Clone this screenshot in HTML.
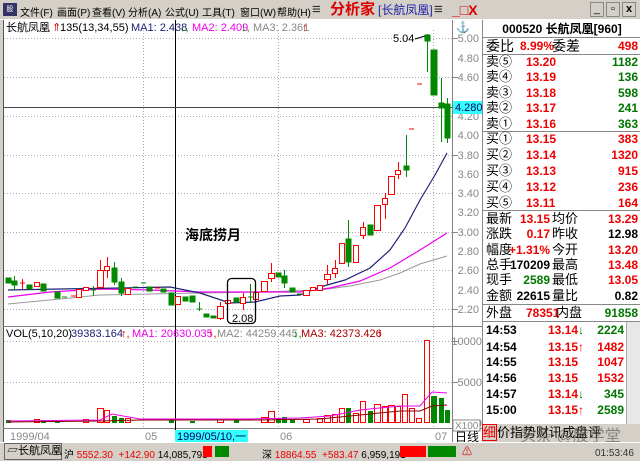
<!DOCTYPE html>
<html><head><meta charset="utf-8"><style>
*{margin:0;padding:0;box-sizing:border-box}
body{width:640px;height:461px;overflow:hidden;background:#d4d0c8;font-family:"Liberation Sans","Noto Sans CJK SC",sans-serif;font-size:12px;position:relative}
.a{position:absolute;white-space:nowrap}
.m{position:absolute;top:4px;font-size:10px;color:#000}
.rp{position:absolute;left:482px;top:20px;width:158px;height:404px;background:#fff;border-left:1px solid #888}
.in{position:absolute;left:0;top:8px;width:158px;height:396px}
.r{position:absolute;left:3px;width:152px;height:16px;font-size:13px;line-height:16px}
.r b{position:absolute;font-weight:bold;font-size:12px}
.red{color:#e00}.grn{color:#070}.blk{color:#000}
.hl{position:absolute;left:0;width:158px;height:1px;background:#888}
.l2{position:absolute;left:66px}
</style></head><body>
<div class="a" style="left:0;top:0;width:640px;height:20px;background:#d4d0c8;border-bottom:1px solid #fff"></div>
<div class="a" style="left:3px;top:3px;width:14px;height:13px;background:#336;color:#fff;font-size:7px;line-height:13px;text-align:center">股</div>
<div class="m" style="left:20px">文件(F)</div><div class="m" style="left:57px">画面(P)</div><div class="m" style="left:92px">查看(V)</div><div class="m" style="left:128px">分析(A)</div><div class="m" style="left:165px">公式(U)</div><div class="m" style="left:202px">工具(T)</div><div class="m" style="left:240px">窗口(W)</div><div class="m" style="left:277px">帮助(H)</div>
<div class="a" style="left:312px;top:1px;font-size:15px;line-height:18px;color:#333">≡</div>
<div class="a" style="left:330px;top:1px;font-size:15px;line-height:18px;color:#d00;font-weight:bold">分析家</div>
<div class="a" style="left:378px;top:2px;font-size:12px;line-height:17px;color:#22a">[长航凤凰]</div>
<div class="a" style="left:434px;top:1px;font-size:15px;line-height:18px;color:#333">≡</div>
<div class="a" style="left:452px;top:1px;font-size:14px;line-height:18px;color:#d00;font-weight:bold">_□X</div>
<div class="a" style="left:590px;top:2px;width:48px;height:15px;font-size:11px;line-height:13px;display:flex;gap:2px"><span style="width:14px;border:1px solid #888;text-align:center">_</span><span style="width:14px;border:1px solid #888;text-align:center">▫</span><span style="width:14px;border:1px solid #888;text-align:center;font-weight:bold">x</span></div>

<svg class="a" style="left:0;top:20px" width="482" height="422" viewBox="0 20 482 422" font-family="Liberation Sans, Noto Sans CJK SC, sans-serif">
<rect x="3" y="20" width="479" height="422" fill="#fff"/>
<line x1="3.5" y1="20" x2="3.5" y2="442" stroke="#555"/>
<line x1="452.5" y1="20" x2="452.5" y2="442" stroke="#808080"/>
<line x1="3" y1="326.5" x2="482" y2="326.5" stroke="#808080"/>
<line x1="3" y1="428.5" x2="482" y2="428.5" stroke="#808080"/>
<g stroke="#aaa" stroke-dasharray="1,2">
<line x1="4" y1="38.5" x2="452" y2="38.5"/><line x1="4" y1="77.5" x2="452" y2="77.5"/><line x1="4" y1="116.5" x2="452" y2="116.5"/><line x1="4" y1="155.5" x2="452" y2="155.5"/><line x1="4" y1="193.5" x2="452" y2="193.5"/><line x1="4" y1="232.5" x2="452" y2="232.5"/><line x1="4" y1="270.5" x2="452" y2="270.5"/><line x1="4" y1="309.5" x2="452" y2="309.5"/>
<line x1="4" y1="341.5" x2="452" y2="341.5"/><line x1="4" y1="382.5" x2="452" y2="382.5"/>
<line x1="143.5" y1="30" x2="143.5" y2="428"/><line x1="278.5" y1="30" x2="278.5" y2="428"/><line x1="433.5" y1="30" x2="433.5" y2="428"/>
</g>
<g fill="#888" font-size="11" text-anchor="end">
<text x="479" y="42">5.00</text><text x="479" y="62">4.80</text><text x="479" y="81">4.60</text><text x="479" y="120">4.20</text><text x="479" y="139">4.00</text><text x="479" y="159">3.80</text><text x="479" y="178">3.60</text><text x="479" y="197">3.40</text><text x="479" y="216">3.20</text><text x="479" y="236">3.00</text><text x="479" y="255">2.80</text><text x="479" y="274">2.60</text><text x="479" y="294">2.40</text><text x="479" y="313">2.20</text>
<text x="482" y="345">10000</text><text x="482" y="386">5000</text><text x="482" y="427">0</text>
</g>
<g stroke="#888"><line x1="452" y1="38.5" x2="458" y2="38.5"/><line x1="452" y1="77.5" x2="458" y2="77.5"/><line x1="452" y1="155.5" x2="458" y2="155.5"/><line x1="452" y1="232.5" x2="458" y2="232.5"/><line x1="452" y1="309.5" x2="458" y2="309.5"/><line x1="452" y1="341.5" x2="458" y2="341.5"/><line x1="452" y1="382.5" x2="458" y2="382.5"/></g>
<rect x="453" y="420" width="27" height="11" fill="#fff" stroke="#888"/><text x="455" y="429" font-size="10" fill="#888">X100</text>
<text x="456" y="31" font-size="11" fill="#080" font-weight="bold">⚓</text>
<line x1="175.5" y1="20" x2="175.5" y2="442" stroke="#000"/>
<line x1="3" y1="107.5" x2="452" y2="107.5" stroke="#444"/>
<rect x="453" y="101" width="29" height="13" fill="#3ff"/><text x="455" y="111" font-size="11" fill="#006">4.280</text>
<text x="6" y="31" font-size="11" fill="#000">长航凤凰</text>
<text x="52" y="31" font-size="11" fill="#c00">⇑</text><text x="60" y="31" font-size="11" fill="#000">135(13,34,55)</text>
<text x="131" y="31" font-size="11" fill="#227">MA1: 2.438</text><text x="180" y="31" font-size="11" fill="#080">↓,</text>
<text x="192" y="31" font-size="11" fill="#e0e">MA2: 2.409</text><text x="241" y="31" font-size="11" fill="#080">↓,</text>
<text x="253" y="31" font-size="11" fill="#888">MA3: 2.361</text><text x="302" y="31" font-size="11" fill="#e00">↑</text>
<text x="6" y="337" font-size="11" fill="#000">VOL(5,10,20)</text>
<text x="71" y="337" font-size="11" fill="#227">39383.164</text><text x="121" y="337" font-size="11" fill="#e00">↑,</text>
<text x="132" y="337" font-size="11" fill="#e0e">MA1: 20630.035</text><text x="208" y="337" font-size="11" fill="#e00">↑,</text>
<text x="217" y="337" font-size="11" fill="#888">MA2: 44259.445</text><text x="293" y="337" font-size="11" fill="#080">↓,</text>
<text x="301" y="337" font-size="11" fill="#a00">MA3: 42373.426</text><text x="377" y="337" font-size="11" fill="#e00">↑</text>
<polyline fill="none" stroke="#999" stroke-width="1" points="8,304 60,299 100,295 150,294 200,293 260,292 320,290 350,286 380,280 400,273 420,264 447,256"/>
<polyline fill="none" stroke="#e0e" stroke-width="1.2" points="8,297 50,292 100,289 150,290 200,292 250,292 300,292 330,288 360,281 390,268 420,250 447,233"/>
<polyline fill="none" stroke="#227" stroke-width="1.2" points="8,290 60,289 120,288 170,287 200,293 230,303 255,302 280,296 300,295 320,287 345,280 370,268 390,250 405,228 420,200 435,175 447,153"/>
<g stroke="#080" fill="#080">
<rect x="6" y="278" width="5" height="5"/><line x1="14.5" y1="276" x2="14.5" y2="290"/><rect x="12" y="281" width="5" height="4"/>
<rect x="27" y="285" width="5" height="4"/><rect x="41" y="284" width="5" height="7"/><rect x="55" y="292" width="5" height="6"/>
<line x1="62" y1="297" x2="67" y2="297"/><line x1="91" y1="290" x2="96" y2="290"/><line x1="93.5" y1="286" x2="93.5" y2="296"/>
<line x1="114.5" y1="262" x2="114.5" y2="285"/><rect x="112" y="268" width="5" height="14"/><line x1="121.5" y1="278" x2="121.5" y2="296"/><rect x="119" y="282" width="5" height="11"/>
<line x1="133" y1="287" x2="138" y2="287"/><line x1="141" y1="283" x2="146" y2="283"/><rect x="147" y="287" width="5" height="4"/><rect x="161" y="289" width="5" height="3"/>
<rect x="169" y="293" width="5" height="12"/><rect x="183" y="297" width="5" height="4"/><rect x="190" y="296" width="5" height="6"/>
<line x1="197" y1="309" x2="202" y2="309"/><line x1="199.5" y1="302" x2="199.5" y2="311"/><rect x="204" y="314" width="5" height="3"/><rect x="211" y="316" width="5" height="2"/>
<rect x="234" y="298" width="5" height="4"/><line x1="248" y1="297" x2="253" y2="297"/><line x1="250.5" y1="284" x2="250.5" y2="303"/>
<rect x="276" y="273" width="5" height="4"/><line x1="284.5" y1="270" x2="284.5" y2="288"/><rect x="282" y="276" width="5" height="7"/><rect x="290" y="288" width="5" height="4"/>
<line x1="297" y1="294" x2="302" y2="294"/><line x1="348.5" y1="220" x2="348.5" y2="267"/><rect x="346" y="239" width="5" height="23"/><rect x="368" y="225" width="5" height="10"/>
<line x1="406.5" y1="135" x2="406.5" y2="177"/><rect x="404" y="166" width="5" height="4"/>
<line x1="427.5" y1="34" x2="427.5" y2="72"/><rect x="425" y="35" width="5" height="6"/>
<rect x="431" y="50" width="6" height="45"/><line x1="441.5" y1="78" x2="441.5" y2="142"/><rect x="439" y="103" width="5" height="5"/>
<line x1="447.5" y1="98" x2="447.5" y2="143"/><rect x="445" y="104" width="5" height="34"/>
</g>
<g stroke="#f00" fill="#fff">
<line x1="22.5" y1="279" x2="22.5" y2="289"/><line x1="20" y1="283" x2="25" y2="283"/><rect x="34.5" y="282.5" width="5" height="4"/>
<line x1="71" y1="296" x2="76" y2="296"/><rect x="76.5" y="289.5" width="5" height="8"/><rect x="83.5" y="287.5" width="5" height="3"/>
<line x1="100.5" y1="260" x2="100.5" y2="290"/><rect x="97.5" y="270.5" width="6" height="17"/><line x1="107.5" y1="257" x2="107.5" y2="278"/><rect x="104.5" y="266.5" width="5" height="4"/>
<rect x="125.5" y="288.5" width="5" height="6"/><line x1="155" y1="288" x2="160" y2="288"/><rect x="175.5" y="296.5" width="5" height="8"/>
<line x1="220.5" y1="302" x2="220.5" y2="320"/><rect x="217.5" y="306.5" width="6" height="12"/><rect x="225.5" y="300.5" width="5" height="3"/>
<line x1="243.5" y1="293" x2="243.5" y2="310"/><rect x="240.5" y="297.5" width="5" height="6"/><rect x="253.5" y="292.5" width="5" height="7"/>
<rect x="261.5" y="281.5" width="6" height="10"/><line x1="271.5" y1="263" x2="271.5" y2="282"/><rect x="268.5" y="273.5" width="6" height="5"/>
<rect x="303.5" y="290.5" width="6" height="5"/><rect x="310.5" y="287.5" width="5" height="3"/><rect x="317.5" y="285.5" width="5" height="5"/>
<line x1="327.5" y1="265" x2="327.5" y2="285"/><rect x="324.5" y="274.5" width="6" height="5"/><line x1="335.5" y1="260" x2="335.5" y2="278"/><rect x="332.5" y="268.5" width="5" height="5"/>
<rect x="339.5" y="243.5" width="5" height="20"/><rect x="353.5" y="245.5" width="5" height="17"/><line x1="363.5" y1="222" x2="363.5" y2="239"/><rect x="360.5" y="227.5" width="5" height="8"/>
<rect x="374.5" y="205.5" width="6" height="25"/><line x1="385.5" y1="193" x2="385.5" y2="219"/><rect x="382.5" y="198.5" width="5" height="6"/>
<rect x="388.5" y="176.5" width="6" height="18"/><line x1="398.5" y1="162" x2="398.5" y2="179"/><rect x="395.5" y="170.5" width="5" height="4"/>
<line x1="409" y1="129" x2="414" y2="129"/><line x1="417" y1="84" x2="422" y2="84"/>
</g>
<text x="393" y="42" font-size="11" fill="#000">5.04</text><line x1="415" y1="39" x2="425" y2="36" stroke="#000"/>
<text x="185" y="240" font-size="14" font-weight="bold" fill="#000">海底捞月</text>
<rect x="227.5" y="278.5" width="28" height="45" rx="4" fill="none" stroke="#000" stroke-width="1.3"/>
<text x="232" y="322" font-size="11" fill="#000">2.08</text>
<g fill="#080">
<rect x="6" y="420" width="5" height="3"/><rect x="41" y="420" width="5" height="3"/><rect x="55" y="421" width="5" height="2"/><rect x="112" y="416" width="5" height="7"/><rect x="119" y="418" width="5" height="5"/><rect x="169" y="419" width="5" height="4"/><rect x="190" y="421" width="5" height="2"/><rect x="234" y="420" width="5" height="3"/><rect x="276" y="418" width="5" height="5"/><rect x="282" y="417" width="5" height="6"/><rect x="290" y="420" width="5" height="3"/><rect x="346" y="408" width="5" height="15"/><rect x="368" y="411" width="5" height="12"/><rect x="431" y="396" width="6" height="27"/><rect x="439" y="398" width="5" height="25"/><rect x="445" y="410" width="5" height="13"/>
</g>
<g fill="#fff" stroke="#f00">
<rect x="34.5" y="419.5" width="5" height="3"/><rect x="83.5" y="419.5" width="5" height="3"/><rect x="97.5" y="408.5" width="6" height="14"/><rect x="104.5" y="410.5" width="5" height="12"/><rect x="125.5" y="418.5" width="5" height="4"/><rect x="217.5" y="419.5" width="6" height="3"/><rect x="261.5" y="417.5" width="6" height="5"/><rect x="268.5" y="411.5" width="6" height="11"/><rect x="303.5" y="419.5" width="6" height="3"/><rect x="317.5" y="418.5" width="5" height="4"/><rect x="324.5" y="415.5" width="6" height="7"/><rect x="332.5" y="414.5" width="5" height="8"/><rect x="339.5" y="408.5" width="5" height="14"/><rect x="353.5" y="413.5" width="5" height="9"/><rect x="360.5" y="401.5" width="5" height="21"/><rect x="374.5" y="404.5" width="6" height="18"/><rect x="382.5" y="406.5" width="5" height="16"/><rect x="388.5" y="405.5" width="6" height="17"/><rect x="395.5" y="406.5" width="5" height="16"/><rect x="402.5" y="394.5" width="5" height="28"/><rect x="409.5" y="408.5" width="5" height="14"/><rect x="416.5" y="418.5" width="5" height="4"/><rect x="424.5" y="340.5" width="5" height="82"/>
</g>
<polyline fill="none" stroke="#e0e" points="8,421 100,420 112,414 140,419 250,419 300,418 330,416 360,410 400,406 420,406 432,392 447,393"/>
<polyline fill="none" stroke="#800" points="8,422 100,421 140,420 260,420 320,419 360,415 400,411 420,411 432,406 447,405"/>
<g font-size="11" fill="#888"><text x="10" y="440">1999/04</text><text x="145" y="440">05</text><text x="280" y="440">06</text><text x="435" y="440">07</text></g>
<rect x="175" y="430" width="73" height="12" fill="#3ff"/><text x="177" y="440" font-size="11" fill="#006">1999/05/10,一</text>
<text x="455" y="441" font-size="12" fill="#000">日线</text>
</svg>

<div class="rp"><div class="in">
<div class="r" style="top:-7px;left:0;width:158px;text-align:center;font-weight:bold;font-size:12px">000520 长航凤凰[960]</div>
<div class="hl" style="top:9px"></div>
<div class="r" style="top:10px"><span style="font-size:14px">委比</span><b class="red" style="left:34px">8.99%</b><span class="l2" style="font-size:14px">委差</span><b class="red" style="right:0">498</b></div>
<div class="hl" style="top:26px"></div>
<div class="r" style="top:26px">卖⑤<b class="red" style="left:40px">13.20</b><b class="grn" style="right:0">1182</b></div>
<div class="r" style="top:41px">卖④<b class="red" style="left:40px">13.19</b><b class="grn" style="right:0">136</b></div>
<div class="r" style="top:57px">卖③<b class="red" style="left:40px">13.18</b><b class="grn" style="right:0">598</b></div>
<div class="r" style="top:72px">卖②<b class="red" style="left:40px">13.17</b><b class="grn" style="right:0">241</b></div>
<div class="r" style="top:88px">卖①<b class="red" style="left:40px">13.16</b><b class="grn" style="right:0">363</b></div>
<div class="hl" style="top:103px"></div>
<div class="r" style="top:103px">买①<b class="red" style="left:40px">13.15</b><b class="red" style="right:0">383</b></div>
<div class="r" style="top:119px">买②<b class="red" style="left:40px">13.14</b><b class="red" style="right:0">1320</b></div>
<div class="r" style="top:135px">买③<b class="red" style="left:40px">13.13</b><b class="red" style="right:0">915</b></div>
<div class="r" style="top:151px">买④<b class="red" style="left:40px">13.12</b><b class="red" style="right:0">236</b></div>
<div class="r" style="top:167px">买⑤<b class="red" style="left:40px">13.11</b><b class="red" style="right:0">164</b></div>
<div class="hl" style="top:182px"></div>
<div class="r" style="top:183px">最新<b class="red" style="right:88px">13.15</b><span class="l2">均价</span><b class="red" style="right:0">13.29</b></div>
<div class="r" style="top:198px">涨跌<b class="red" style="right:88px">0.17</b><span class="l2">昨收</span><b class="blk" style="right:0">12.98</b></div>
<div class="r" style="top:214px">幅度<b class="red" style="right:88px">+1.31%</b><span class="l2">今开</span><b class="red" style="right:0">13.20</b></div>
<div class="r" style="top:229px">总手<b class="blk" style="right:88px">170209</b><span class="l2">最高</span><b class="red" style="right:0">13.48</b></div>
<div class="r" style="top:244px">现手<b class="grn" style="right:88px">2589</b><span class="l2">最低</span><b class="red" style="right:0">13.05</b></div>
<div class="r" style="top:260px">金额<b class="blk" style="right:88px">22615</b><span class="l2">量比</span><b class="blk" style="right:0">0.82</b></div>
<div class="hl" style="top:276px"></div>
<div class="r" style="top:277px">外盘<b class="red" style="left:40px">78351</b><span class="l2" style="left:70px">内盘</span><b class="grn" style="right:0">91858</b></div>
<div class="hl" style="top:293px"></div>
<div class="a" style="left:143px;top:294px;width:14px;height:102px;background:#e8e8e8;border-left:1px solid #aaa"></div>
<div class="r" style="top:294px;width:138px"><b class="blk" style="left:0">14:53</b><b class="red" style="left:62px">13.14<span class="grn">↓</span></b><b class="grn" style="right:0">2224</b></div>
<div class="r" style="top:311px;width:138px"><b class="blk" style="left:0">14:54</b><b class="red" style="left:62px">13.15↑</b><b class="red" style="right:0">1482</b></div>
<div class="r" style="top:326px;width:138px"><b class="blk" style="left:0">14:55</b><b class="red" style="left:62px">13.15</b><b class="red" style="right:0">1047</b></div>
<div class="r" style="top:342px;width:138px"><b class="blk" style="left:0">14:56</b><b class="red" style="left:62px">13.15</b><b class="red" style="right:0">1532</b></div>
<div class="r" style="top:358px;width:138px"><b class="blk" style="left:0">14:57</b><b class="red" style="left:62px">13.14<span class="grn">↓</span></b><b class="grn" style="right:0">345</b></div>
<div class="r" style="top:374px;width:138px"><b class="blk" style="left:0">15:00</b><b class="red" style="left:62px">13.15↑</b><b class="grn" style="right:0">2589</b></div>
</div></div>
<div class="a" style="left:482px;top:424px;width:158px;height:18px;background:#d4d0c8;font-size:13px;line-height:18px;color:#000"><span style="color:#e00;border:1px solid #e00">细</span>价指势财讯成盘评</div>
<div class="a" style="left:520px;top:422px;font-size:16px;color:rgba(80,80,80,.6)">头条 @股学堂</div>

<div class="a" style="left:0;top:442px;width:640px;height:19px;background:#d4d0c8;border-top:1px solid #fff"></div>
<div class="a" style="left:4px;top:443px;width:58px;height:17px;border:1px solid #666;background:#d4d0c8;font-size:11px;line-height:15px;padding-left:2px">▱长航凤凰</div>
<div class="a" style="left:64px;top:446px;font-size:10px">沪 <span style="color:#e00">5552.30 &nbsp;+142.90</span> 14,085,793</div>
<div class="a" style="left:203px;top:446px;width:9px;height:11px;background:#f00"></div>
<div class="a" style="left:215px;top:446px;width:14px;height:11px;background:#080"></div>
<div class="a" style="left:262px;top:446px;font-size:10px">深 <span style="color:#e00">18864.55 &nbsp;+583.47</span> 6,959,191</div>
<div class="a" style="left:400px;top:446px;width:26px;height:11px;background:#f00"></div>
<div class="a" style="left:428px;top:446px;width:28px;height:11px;background:#080"></div>
<div class="a" style="left:462px;top:443px;font-size:10px;color:#c00">⚠</div>
<div class="a" style="left:595px;top:448px;font-size:10px;color:#333">01:53:46</div>
</body></html>
